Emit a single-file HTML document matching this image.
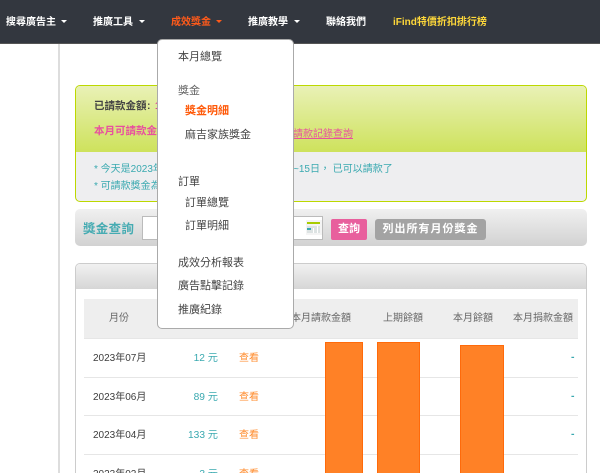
<!DOCTYPE html>
<html lang="zh-Hant">
<head>
<meta charset="utf-8">
<style>
html,body{margin:0;padding:0;background:#fff;width:600px;height:473px;overflow:hidden;}
#w{width:600px;height:473px;overflow:hidden;position:relative;font-family:"Liberation Sans","Noto Sans CJK TC",sans-serif;font-size:11px;color:#444;}
.a{position:absolute;white-space:nowrap;line-height:16px;}
.nav{position:absolute;left:0;top:0;width:600px;height:43px;background:#33373f;border-bottom:1px solid #555;}
.n{color:#fff;font-size:10px;font-weight:700;top:15px;}
.c{position:absolute;width:0;height:0;border-left:3px solid transparent;border-right:3px solid transparent;border-top:3px solid #fff;top:20px;}
.m{font-size:11px;color:#444;}
.h{color:#666;font-size:10px;top:311px;text-align:center;}
.d{color:#3c3c3c;font-size:10px;left:93px;}
.v{color:#3aa9b0;font-size:10.2px;width:60px;text-align:right;left:158px;}
.l{color:#ff8a2a;font-size:10px;left:239px;}
.dash{color:#3aa9b0;font-size:10.5px;font-weight:700;left:571px;}
.line{position:absolute;left:84px;width:494px;height:1px;background:#e6e6e6;}
.bar{position:absolute;background:#ff8126;border:1px solid #ff6a0a;border-bottom:0;box-sizing:border-box;}
</style>
</head>
<body>
<div id="w">
<div class="nav"></div>
<div class="a n" style="left:6px;">搜尋廣告主</div><div class="c" style="left:61px;"></div>
<div class="a n" style="left:93px;">推廣工具</div><div class="c" style="left:139px;"></div>
<div class="a n" style="left:171px;color:#ff5a1a;">成效獎金</div><div class="c" style="left:216px;border-top-color:#ff5a1a;"></div>
<div class="a n" style="left:248px;">推廣教學</div><div class="c" style="left:294px;"></div>
<div class="a n" style="left:326px;">聯絡我們</div>
<div class="a n" style="left:393px;color:#ffd83a;">iFind特價折扣排行榜</div>

<div style="position:absolute;left:58px;top:44px;width:2px;height:429px;background:#ddd;"></div>

<div style="position:absolute;left:75px;top:85px;width:512px;height:117px;box-sizing:border-box;border:1.5px solid #bcd800;border-radius:5px;background:#eeeef0;overflow:hidden;">
  <div style="height:66px;background:linear-gradient(#e9f1b6,#cee25c);"></div>
</div>
<div class="a" style="left:94px;top:98px;font-weight:700;color:#444;font-size:10.5px;">已請款金額</div>
<div class="a" style="left:147px;top:98px;font-weight:700;color:#444;font-size:10.5px;">:</div>
<div class="a" style="left:155px;top:98px;font-weight:700;color:#e0409a;font-size:10.5px;">1</div>
<div class="a" style="left:94px;top:123px;font-weight:700;color:#e8509e;font-size:10.5px;">本月可請款金額</div>
<div class="a" style="left:293px;top:127px;color:#e8509e;font-size:10px;text-decoration:underline;">請款記錄查詢</div>
<div class="a" style="left:94px;top:162px;color:#3aa9b0;font-size:10px;">* 今天是2023年</div>
<div class="a" style="left:293px;top:162px;color:#3aa9b0;font-size:10px;">~15日， 已可以請款了</div>
<div class="a" style="left:94px;top:179px;color:#3aa9b0;font-size:10px;">* 可請款獎金為</div>

<div style="position:absolute;left:75px;top:209px;width:512px;height:37px;border-radius:5px;background:linear-gradient(#f0f0f0,#d2d2d2);"></div>
<div class="a" style="left:83px;top:221px;color:#45abb2;font-weight:700;font-size:12.5px;letter-spacing:.3px;">獎金查詢</div>
<div style="position:absolute;left:142px;top:216px;width:181px;height:24px;box-sizing:border-box;background:#fff;border:1px solid #bbb;"></div>
<svg style="position:absolute;left:306px;top:220px;" width="16" height="15" viewBox="0 0 16 15"><rect width="16" height="15" fill="#f4f4f4"/><rect x="1" y="2" width="13" height="2" fill="#a8cc00"/><rect x="1" y="6" width="13" height="7" fill="#dde3e3"/><rect x="1" y="8" width="4" height="2" fill="#3aa9b0"/><rect x="7" y="8" width="1" height="5" fill="#fff"/><rect x="11" y="6" width="1" height="7" fill="#fff"/></svg>
<div class="a" style="left:331px;top:219px;width:36px;height:21px;line-height:21px;background:#e85f9d;border-radius:2px;color:#fff;font-weight:700;text-align:center;font-size:11px;">查詢</div>
<div class="a" style="left:375px;top:219px;width:111px;height:21px;line-height:21px;background:#a3a3a3;border-radius:3px;color:#fff;font-weight:700;text-align:center;font-size:11px;letter-spacing:1px;">列出所有月份獎金</div>

<div style="position:absolute;left:75px;top:263px;width:512px;height:230px;box-sizing:border-box;border:1px solid #ccc;border-radius:5px;background:#fff;">
  <div style="height:25px;background:linear-gradient(#f1f1f1,#d6d6d6);border-radius:4px 4px 0 0;"></div>
</div>
<div style="position:absolute;left:84px;top:299px;width:494px;height:39px;background:#eee;"></div>
<div class="line" style="top:338px;"></div>
<div class="line" style="top:377px;"></div>
<div class="line" style="top:415px;"></div>
<div class="line" style="top:454px;"></div>

<div class="a h" style="left:109px;">月份</div>
<div class="a h" style="left:291px;">本月請款金額</div>
<div class="a h" style="left:383px;">上期餘額</div>
<div class="a h" style="left:453px;">本月餘額</div>
<div class="a h" style="left:513px;">本月捐款金額</div>

<div class="a d" style="top:351px;">2023年07月</div><div class="a v" style="top:351px;">12 元</div><div class="a l" style="top:351px;">查看</div><div class="a dash" style="top:349px;">-</div>
<div class="a d" style="top:390px;">2023年06月</div><div class="a v" style="top:390px;">89 元</div><div class="a l" style="top:390px;">查看</div><div class="a dash" style="top:388px;">-</div>
<div class="a d" style="top:428px;">2023年04月</div><div class="a v" style="top:428px;">133 元</div><div class="a l" style="top:428px;">查看</div><div class="a dash" style="top:426px;">-</div>
<div class="a d" style="top:467px;">2023年02月</div><div class="a v" style="top:467px;">3 元</div><div class="a l" style="top:467px;">查看</div>

<div class="bar" style="left:325px;top:342px;width:38px;height:131px;"></div>
<div class="bar" style="left:377px;top:342px;width:43px;height:131px;"></div>
<div class="bar" style="left:460px;top:345px;width:44px;height:128px;"></div>

<div style="position:absolute;left:157px;top:39px;width:137px;height:290px;box-sizing:border-box;background:#fff;border:1px solid #aaa;border-radius:5px;"></div>
<div class="a m" style="left:178px;top:49px;">本月總覽</div>
<div class="a m" style="left:178px;top:83px;color:#666;">獎金</div>
<div class="a m" style="left:185px;top:103px;color:#ff5a0a;font-weight:700;">獎金明細</div>
<div class="a m" style="left:185px;top:127px;">麻吉家族獎金</div>
<div class="a m" style="left:178px;top:174px;">訂單</div>
<div class="a m" style="left:185px;top:195px;">訂單總覽</div>
<div class="a m" style="left:185px;top:218px;">訂單明細</div>
<div class="a m" style="left:178px;top:255px;">成效分析報表</div>
<div class="a m" style="left:178px;top:278px;">廣告點擊記錄</div>
<div class="a m" style="left:178px;top:302px;">推廣紀錄</div>
</div>
</body>
</html>
